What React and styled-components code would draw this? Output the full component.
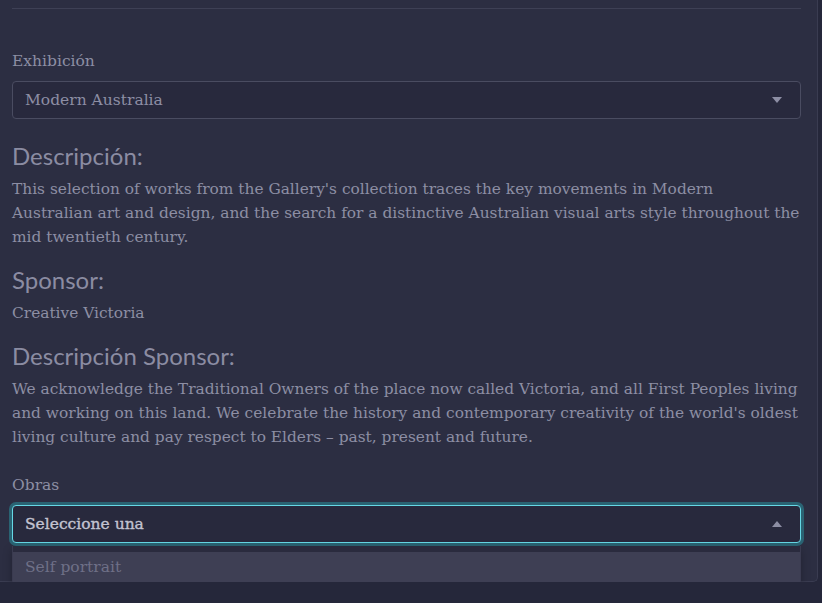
import React from "react";
import styled, { createGlobalStyle } from "styled-components";

const Global = createGlobalStyle`
  html, body { margin: 0; padding: 0; background: #25273a; }
  body { font-family: "DejaVu Serif", serif; }
  * { box-sizing: border-box; }
`;

const Card = styled.div`
  width: 818px;
  background: #2c2e42;
  border-right: 1px solid #3a3c51;
  border-bottom: 1px solid #3a3c51;
  border-bottom-right-radius: 5px;
  padding: 8px 16px 38px 12px;
`;

const Divider = styled.hr`
  margin: 0;
  border: 0;
  height: 1px;
  background: #3e4055;
`;

const Field = styled.div`
  display: flex;
  flex-direction: column;
  gap: 8px;
  margin-top: ${(p) => p.$top}px;
  position: relative;
`;

const Label = styled.label`
  font-family: "DejaVu Serif", serif;
  font-size: 15.5px;
  line-height: 24px;
  color: #8d8ea4;
`;

const SelectBox = styled.div`
  height: 38px;
  display: flex;
  align-items: center;
  justify-content: space-between;
  padding: 0 18px 0 12px;
  background: #28293d;
  border: 1px solid ${(p) => (p.$focused ? "#66d8e6" : "#4a4c61")};
  border-radius: 4px;
  box-shadow: ${(p) => (p.$focused ? "0 0 0 3px #2a6373" : "none")};
  font-size: 15.5px;
  color: ${(p) => (p.$focused ? "#c3c3d1" : "#8d8ea4")};
  -webkit-text-stroke: ${(p) => (p.$focused ? "0.35px #c3c3d1" : "0")};
`;

const Caret = styled.svg`
  width: 10px;
  height: 6px;
  fill: #8d8ea4;
`;

const Heading = styled.h2`
  margin: ${(p) => p.$top}px 0 6px;
  font-family: Lato, sans-serif;
  font-weight: 400;
  font-size: 24px;
  line-height: 30px;
  color: #8b8ca2;
`;

const Text = styled.p`
  margin: 0;
  font-size: 15.4px;
  line-height: 24px;
  color: #8d8ea4;
`;

const Line = styled.span`
  display: block;
  white-space: nowrap;
`;

const Menu = styled.div`
  position: absolute;
  left: 0;
  right: 0;
  top: 100%;
  margin-top: 3px;
  padding: 6px 0;
  background: #2a2b3e;
  border: 1px solid #3a3b50;
  border-top: 0;
  border-radius: 0 0 4px 4px;
  box-shadow: 0 4px 10px rgba(0, 0, 0, 0.25);
`;

const Option = styled.div`
  height: 30px;
  display: flex;
  align-items: center;
  padding-left: 12px;
  background: ${(p) => (p.$active ? "#3e3f54" : "transparent")};
  font-size: 15.5px;
  color: #6f7087;
`;

const Down = () => (
  <Caret viewBox="0 0 10 6">
    <path d="M0 0 H10 L5 6 Z" />
  </Caret>
);
const Up = () => (
  <Caret viewBox="0 0 10 6">
    <path d="M0 6 H10 L5 0 Z" />
  </Caret>
);

const description = [
  "This selection of works from the Gallery's collection traces the key movements in Modern",
  "Australian art and design, and the search for a distinctive Australian visual arts style throughout the",
  "mid twentieth century.",
];

const sponsorDescription = [
  "We acknowledge the Traditional Owners of the place now called Victoria, and all First Peoples living",
  "and working on this land. We celebrate the history and contemporary creativity of the world's oldest",
  "living culture and pay respect to Elders – past, present and future.",
];

export default function App() {
  return (
    <>
      <Global />
      <Card>
        <Divider />
        <Field $top={40}>
          <Label>Exhibición</Label>
          <SelectBox>
            <span>Modern Australia</span>
            <Down />
          </SelectBox>
        </Field>
        <Heading $top={22}>Descripción:</Heading>
        <Text>
          {description.map((l) => (
            <Line key={l}>{l}</Line>
          ))}
        </Text>
        <Heading $top={16}>Sponsor:</Heading>
        <Text>Creative Victoria</Text>
        <Heading $top={16}>Descripción Sponsor:</Heading>
        <Text>
          {sponsorDescription.map((l) => (
            <Line key={l}>{l}</Line>
          ))}
        </Text>
        <Field $top={24}>
          <Label>Obras</Label>
          <SelectBox $focused>
            <span>Seleccione una</span>
            <Up />
          </SelectBox>
          <Menu>
            <Option $active>Self portrait</Option>
          </Menu>
        </Field>
      </Card>
    </>
  );
}
